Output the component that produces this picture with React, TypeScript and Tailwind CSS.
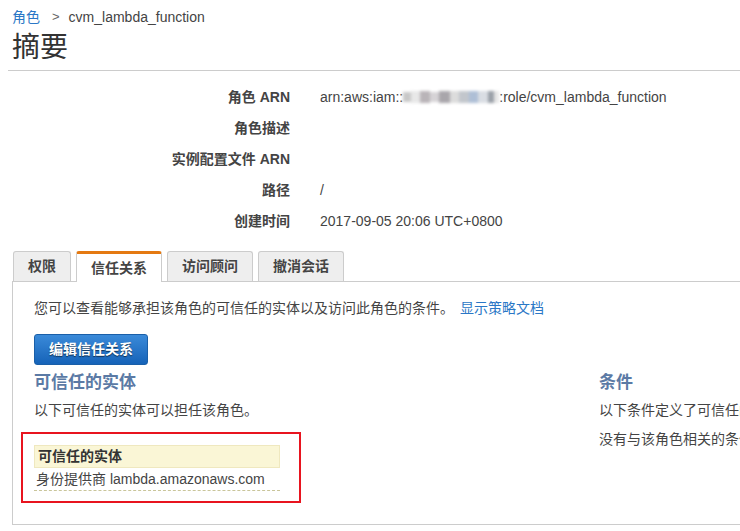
import React from "react";

const font = { fontFamily: '"Liberation Sans", "Noto Sans CJK SC", Arial, sans-serif' };

const details: { label: string; value: React.ReactNode }[] = [
  {
    label: "角色 ARN",
    value: (
      <span className="inline-flex items-center">
        arn:aws:iam::
        <span className="inline-flex h-[14px] items-center blur-[1.5px]">
          <span className="w-[8px] h-[10px] bg-[#c8c8c8]" />
          <span className="w-[9px] h-[12px] bg-[#e8e8e8]" />
          <span className="w-[10px] h-[12px] bg-[#b9b4b8]" />
          <span className="w-[9px] h-[10px] bg-[#d6d3d6]" />
          <span className="w-[11px] h-[12px] bg-[#a9a6ab]" />
          <span className="w-[9px] h-[12px] bg-[#dcdcdc]" />
          <span className="w-[10px] h-[12px] bg-[#c2c6cc]" />
          <span className="w-[9px] h-[12px] bg-[#aebfd6]" />
          <span className="w-[10px] h-[12px] bg-[#d9dde3]" />
          <span className="w-[6px] h-[12px] bg-[#9aa0a8]" />
          <span className="w-[5px] h-[12px] bg-[#e6e6e6]" />
        </span>
        :role/cvm_lambda_function
      </span>
    ),
  },
  { label: "角色描述", value: "" },
  { label: "实例配置文件 ARN", value: "" },
  { label: "路径", value: "/" },
  { label: "创建时间", value: "2017-09-05 20:06 UTC+0800" },
];

const tabs = ["权限", "信任关系", "访问顾问", "撤消会话"];

export default function App() {
  return (
    <div className="w-[740px] h-[531px] overflow-hidden bg-white text-[#444] text-[14px]" style={font}>
      <div className="pl-[12px] pt-[8px]">
        <div className="flex items-center h-[18px]">
          <span className="text-[#2a77c6]">角色</span>
          <span className="ml-[12px] mr-[9px] text-[#666] text-[13px]">&gt;</span>
          <span className="text-[#444]">cvm_lambda_function</span>
        </div>
        <h1 className="text-[28px] leading-[36px] mt-[4px] text-[#333]">摘要</h1>
      </div>
      <div className="ml-[8px] mt-[4px] h-px bg-[#ccc]" />

      <div className="mt-[16px] flex flex-col gap-[11px]">
        {details.map((d) => (
          <div key={d.label} className="flex h-[20px] items-center">
            <div className="w-[290px] text-right font-bold text-[#444]">{d.label}</div>
            <div className="pl-[30px] text-[#444] whitespace-nowrap">{d.value}</div>
          </div>
        ))}
      </div>

      <div className="ml-[12px] mt-[20px] w-[800px]">
        <div className="flex gap-[5px] pl-[1px] relative z-10">
          {tabs.map((t, i) => {
            const active = i === 1;
            return (
              <div
                key={t}
                className={
                  active
                    ? "w-[86px] h-[31px] -mb-px flex items-center justify-center font-bold rounded-t-[3px] bg-white border-x border-[#ccc] border-t-[3px] border-t-[#e47911] text-[#444]"
                    : i === 0
                    ? "w-[58px] h-[30px] flex items-center justify-center font-bold rounded-t-[3px] bg-[#eee] border border-b-0 border-[#ccc] text-[#444]"
                    : "w-[86px] h-[30px] flex items-center justify-center font-bold rounded-t-[3px] bg-[#eee] border border-b-0 border-[#ccc] text-[#444]"
                }
              >
                {t}
              </div>
            );
          })}
        </div>
        <div className="border-t border-l border-b border-[#ccc] h-[244px] pl-[21px] pt-[16px]">
          <p className="leading-[20px] whitespace-nowrap">
            您可以查看能够承担该角色的可信任的实体以及访问此角色的条件。
            <span className="ml-[6px] text-[#2a77c6]">显示策略文档</span>
          </p>
          <button className="mt-[16px] w-[114px] h-[31px] rounded-[3px] border border-[#1a5fa8] bg-gradient-to-b from-[#3a8ad9] to-[#1563b8] text-white font-bold text-[14px] [text-shadow:0_1px_1px_rgba(0,0,0,0.6)]">
            编辑信任关系
          </button>
          <div className="flex mt-[6px]">
            <div className="w-[565px] shrink-0">
              <h2 className="text-[17px] font-bold leading-[24px] text-[#5b7aa5]">可信任的实体</h2>
              <p className="mt-[6px] leading-[18px]">以下可信任的实体可以担任该角色。</p>
              <div className="-ml-[13px] mt-[13px] w-[280px] h-[71px] border-2 border-[#e8141f] pl-[11px] pt-[11px] pr-[19px]">
                <div className="h-[23px] bg-[#faf6d6] border border-[#efe8bf] flex items-center pl-[3px] font-bold text-[#333]">
                  可信任的实体
                </div>
                <div className="h-[23px] border-b border-dashed border-[#c9c59a] flex items-center pl-[2px] text-[#444]">
                  身份提供商 lambda.amazonaws.com
                </div>
              </div>
            </div>
            <div className="whitespace-nowrap">
              <h2 className="text-[17px] font-bold leading-[24px] text-[#5b7aa5]">条件</h2>
              <p className="mt-[6px] leading-[18px]">以下条件定义了可信任的实体何时可以担任该角色。</p>
              <p className="mt-[11px] leading-[18px]">没有与该角色相关的条件。</p>
            </div>
          </div>
        </div>
      </div>
    </div>
  );
}
